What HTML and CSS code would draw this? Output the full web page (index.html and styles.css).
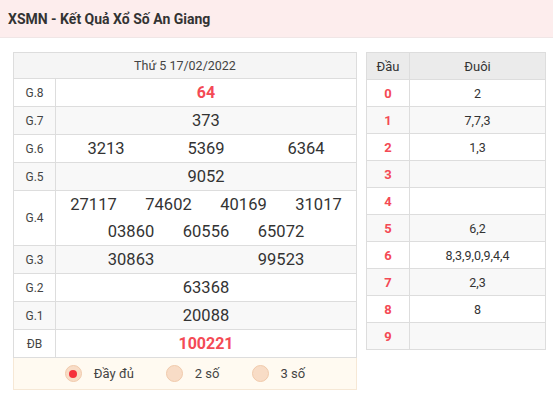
FILE: index.html
```html
<!DOCTYPE html>
<html lang="vi">
<head>
<meta charset="utf-8">
<title>XSMN - Kết Quả Xổ Số An Giang</title>
<link rel="stylesheet" href="styles.css">
</head>
<body>
<header class="header"><h1 class="title">XSMN - Kết Quả Xổ Số An Giang</h1></header>
<main class="main">
  <section class="results">
    <table class="kq">
      <colgroup><col class="c-label"><col></colgroup>
      <tr class="r-date"><td colspan="2" class="date">Thứ 5 17/02/2022</td></tr>
      <tr><td class="lbl">G.8</td><td class="val"><div class="nums"><span class="n n1 hot">64</span></div></td></tr>
      <tr class="alt"><td class="lbl">G.7</td><td class="val"><div class="nums"><span class="n n1">373</span></div></td></tr>
      <tr><td class="lbl">G.6</td><td class="val"><div class="nums"><span class="n n3">3213</span><span class="n n3">5369</span><span class="n n3">6364</span></div></td></tr>
      <tr class="alt"><td class="lbl">G.5</td><td class="val"><div class="nums"><span class="n n1">9052</span></div></td></tr>
      <tr class="r-g4"><td class="lbl">G.4</td><td class="val"><div class="nums"><span class="n n4">27117</span><span class="n n4">74602</span><span class="n n4">40169</span><span class="n n4">31017</span><span class="n n4">03860</span><span class="n n4">60556</span><span class="n n4">65072</span></div></td></tr>
      <tr class="alt"><td class="lbl">G.3</td><td class="val"><div class="nums"><span class="n n2">30863</span><span class="n n2">99523</span></div></td></tr>
      <tr><td class="lbl">G.2</td><td class="val"><div class="nums"><span class="n n1">63368</span></div></td></tr>
      <tr class="alt"><td class="lbl">G.1</td><td class="val"><div class="nums"><span class="n n1">20088</span></div></td></tr>
      <tr><td class="lbl">ĐB</td><td class="val"><div class="nums"><span class="n n1 hot">100221</span></div></td></tr>
    </table>
    <div class="opts">
      <label class="opt"><span class="radio checked"></span><span>Đầy đủ</span></label>
      <label class="opt"><span class="radio"></span><span>2 số</span></label>
      <label class="opt"><span class="radio"></span><span>3 số</span></label>
    </div>
  </section>
  <table class="lt">
    <colgroup><col class="c-dau"><col></colgroup>
    <tr class="lt-head"><th>Đầu</th><th>Đuôi</th></tr>
    <tr><td class="dau">0</td><td>2</td></tr>
    <tr class="alt"><td class="dau">1</td><td>7,7,3</td></tr>
    <tr><td class="dau">2</td><td>1,3</td></tr>
    <tr class="alt"><td class="dau">3</td><td></td></tr>
    <tr><td class="dau">4</td><td></td></tr>
    <tr class="alt"><td class="dau">5</td><td>6,2</td></tr>
    <tr><td class="dau">6</td><td>8,3,9,0,9,4,4</td></tr>
    <tr class="alt"><td class="dau">7</td><td>2,3</td></tr>
    <tr><td class="dau">8</td><td>8</td></tr>
    <tr class="alt"><td class="dau">9</td><td></td></tr>
  </table>
</main>
</body>
</html>
```
FILE: styles.css
```css
* { box-sizing: border-box; }
body {
  margin: 0;
  font-family: Roboto, "Noto Sans", "DejaVu Sans", sans-serif;
  color: #333;
  background: #fff;
}
.header {
  height: 38px;
  background: #fdeded;
  border-bottom: 1px solid #f0e6e6;
  display: flex;
  align-items: center;
  padding-left: 8px;
}
.title {
  margin: 0;
  font-size: 14px;
  font-weight: 700;
  color: #333;
}
.main {
  display: flex;
  align-items: flex-start;
  gap: 9px;
  padding: 14px 7px 0 13px;
}
.results { width: 344px; flex-shrink: 0; }
.kq {
  width: 100%;
  border-collapse: collapse;
  table-layout: fixed;
}
.kq td {
  border: 1px solid #ddd;
  padding: 0;
}
.c-label { width: 42px; }
.date {
  height: 26px;
  background: #f5f5f5;
  text-align: center;
  font-size: 12.5px;
  color: #444;
}
.lbl {
  height: 28px;
  text-align: center;
  font-size: 12px;
  color: #444;
}
.r-g4 .lbl { height: 55px; }
.alt td { background: #f8f8f8; }
.nums {
  display: flex;
  flex-wrap: wrap;
  justify-content: center;
}
.n {
  text-align: center;
  font-size: 16.5px;
  line-height: 27px;
  color: #333;
}
.n1 { width: 100%; }
.n2 { width: 50%; }
.n3 { width: 33.333%; }
.n4 { width: 25%; }
.hot { color: #f44a55; font-weight: 700; font-size: 16px; }
.opts {
  height: 32px;
  background: #fffaf1;
  border: 1px solid #f6e8d6;
  border-top: none;
  display: flex;
  align-items: center;
  justify-content: center;
  gap: 32px;
  font-size: 13px;
  color: #444;
}
.opt {
  display: flex;
  align-items: center;
  gap: 12px;
}
.radio {
  width: 17px;
  height: 17px;
  border-radius: 50%;
  background: #f8dcc6;
  border: 1px solid #f0caac;
  display: flex;
  align-items: center;
  justify-content: center;
}
.radio.checked::after {
  content: "";
  width: 8px;
  height: 8px;
  border-radius: 50%;
  background: #f5303c;
}
.lt {
  width: 180px;
  flex-shrink: 0;
  border-collapse: collapse;
  table-layout: fixed;
}
.c-dau { width: 43px; }
.lt th, .lt td {
  border: 1px solid #ddd;
  height: 27px;
  padding: 0;
  text-align: center;
  font-size: 12.5px;
  font-weight: 400;
  color: #333;
}
.lt th { background: #ebebeb; font-size: 13px; }
.lt .alt td { background: #f8f8f8; }
.lt .dau { color: #f44a55; font-weight: 700; font-size: 13px; }
```
